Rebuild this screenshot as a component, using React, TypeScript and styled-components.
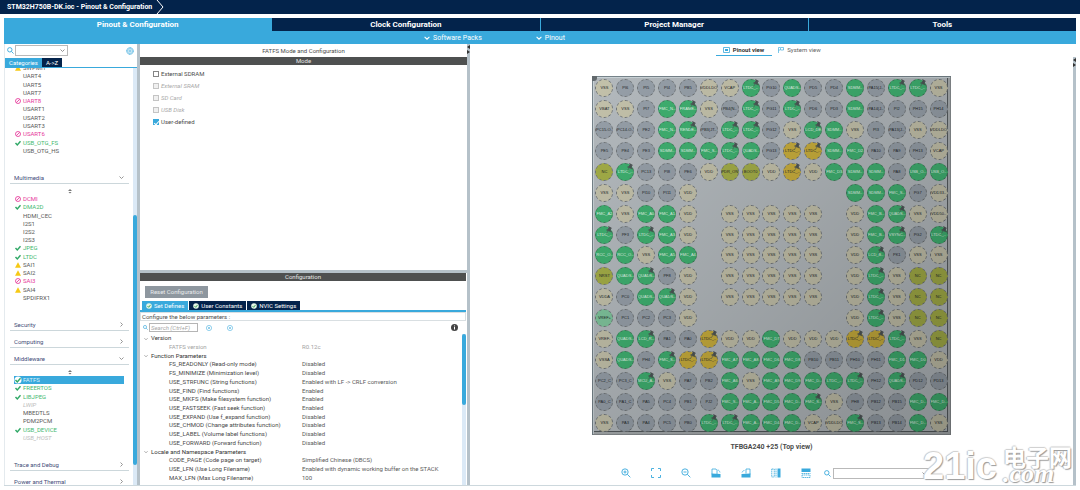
import React from "react";
import styled, { createGlobalStyle, css } from "styled-components";

const navy = "#03234b";
const blue = "#39a9dc";
const slate = "#b5c1c9";

const GlobalStyle = createGlobalStyle`
  * { box-sizing: border-box; }
  body { margin: 0; background: #fff; font: 6px/8px Roboto, "Liberation Sans", sans-serif; color: #4c4c4c; }
  button, input, select { font: inherit; color: inherit; margin: 0; padding: 0; }
`;

const Page = styled.div`
  display: flex;
  flex-direction: column;
  height: 100vh;
  position: relative;
`;

const TitleBar = styled.header`
  display: flex;
  align-items: center;
  flex: none;
  height: 14px;
  padding-left: 7px;
  gap: 4px;
  background: ${navy};
  color: #fff;
  font-size: 7px;
  font-weight: 700;
`;

const Shell = styled.div`
  display: flex;
  flex-direction: column;
  flex: 1;
  min-height: 0;
  margin: 4px;
`;

const MainTabs = styled.nav`
  display: grid;
  grid-template-columns: repeat(4, 1fr);
  flex: none;
  height: 13px;
  gap: 1px;
  background: ${blue};
`;

const MainTab = styled.button<{ $active?: boolean }>`
  border: 0;
  background: ${(p) => (p.$active ? blue : navy)};
  color: #fff;
  font-size: 8px;
  line-height: 13px;
  font-weight: 700;
`;

const SubBar = styled.div`
  display: flex;
  justify-content: center;
  align-items: center;
  gap: 54px;
  flex: none;
  height: 13px;
  padding-right: 91px;
  background: ${blue};
`;

const SubItem = styled.button`
  display: flex;
  align-items: center;
  gap: 3px;
  border: 0;
  background: none;
  color: #fff;
  font-size: 7px;
`;

const Main = styled.main`
  display: flex;
  flex: 1;
  min-height: 0;
  border-bottom: 1px solid #cdd8dd;
`;

const Splitter = styled.div`
  flex: none;
  width: 3px;
  background: ${slate};
`;

const SidePanel = styled.aside`
  display: flex;
  flex-direction: column;
  flex: none;
  width: 133px;
  border-left: 1px solid #e4eaee;
`;

const SearchRow = styled.div`
  display: flex;
  align-items: center;
  flex: none;
  height: 14px;
  padding: 0 3px 1px 2px;
  gap: 1px;
`;

const Spacer = styled.div`
  flex: 1;
`;

const ComboWrap = styled.label<{ $w: number }>`
  display: flex;
  align-items: center;
  width: ${(p) => p.$w}px;
  height: 11px;
  padding-right: 2px;
  border: 1px solid #b9b9b9;
  background: #fff;
`;

const Combo = styled.select`
  appearance: none;
  flex: 1;
  min-width: 0;
  height: 9px;
  border: 0;
  background: none;
`;

const TabStrip = styled.div<{ $inset?: boolean }>`
  display: flex;
  gap: ${(p) => (p.$inset ? 1 : 0)}px;
  flex: none;
  padding-left: ${(p) => (p.$inset ? 2 : 0)}px;
  border-bottom: ${(p) => (p.$inset ? 2 : 1)}px solid ${blue};
`;

const SmallTab = styled.button<{ $active?: boolean }>`
  display: flex;
  align-items: center;
  gap: 2px;
  height: 9px;
  padding: 0 4px;
  border: 0;
  background: ${(p) => (p.$active ? blue : navy)};
  color: #fff;
`;

const ScrollArea = styled.div`
  display: flex;
  flex: 1;
  min-height: 0;
`;

const Tree = styled.div`
  flex: 1;
  min-width: 0;
  overflow: hidden;
  padding: 0 4px 0 5px;
`;

const Track = styled.div`
  display: flex;
  flex-direction: column;
  flex: none;
  width: 4px;
  background: #dbe9f6;
`;

const Thumb = styled.div<{ $before: number; $size: number }>`
  height: ${(p) => p.$size}%;
  margin-top: ${(p) => p.$before}px;
  border-radius: 2px;
  background: ${blue};
`;

const Items = styled.ul<{ $h: number; $scrolled?: boolean }>`
  display: grid;
  grid-auto-rows: 1fr;
  min-height: ${(p) => p.$h}px;
  margin: ${(p) => (p.$scrolled ? -4 : 0)}px 5px 12px 4px;
  padding: 0;
  list-style: none;
`;

type State = "ok" | "warn" | "no" | "off" | "sel" | "";

const tones: Record<State, string> = {
  ok: "#45b970",
  warn: "#5a5a5a",
  no: "#e6399b",
  off: "#bcbcbc",
  sel: "#d8f0fa",
  "": "#5a5a5a",
};

const Item = styled.li<{ $state: State }>`
  display: flex;
  align-items: center;
  gap: 2px;
  min-height: 0;
  height: 100%;
  padding-left: 1px;
  line-height: 8px;
  color: ${(p) => tones[p.$state]};
  ${(p) => p.$state === "off" && css`font-style: italic;`}
  ${(p) => p.$state === "sel" && css`background: ${blue};`}
`;

const IconSlot = styled.span`
  display: flex;
  align-items: center;
  justify-content: center;
  width: 6px;
  height: 8px;
`;

const SectionHead = styled.button`
  display: flex;
  align-items: flex-end;
  justify-content: space-between;
  width: 100%;
  height: 17px;
  padding: 0 5px 1px 4px;
  border: 0;
  border-bottom: 1px solid #ccd7db;
  background: none;
  color: #3f4c78;
  svg { margin-bottom: 2px; }
`;

const Handle = styled.div`
  display: flex;
  justify-content: center;
  align-items: flex-end;
  height: 11px;
  padding: 0 0 1px;
`;

const Middle = styled.section`
  display: flex;
  flex-direction: column;
  flex: none;
  width: 327px;
`;

const PanelTitle = styled.h2`
  flex: none;
  margin: 0;
  font-size: 6px;
  line-height: 13px;
  font-weight: 400;
  text-align: center;
`;

const DarkBar = styled.h3`
  flex: none;
  margin: 0;
  background: #4e5050;
  color: #e6e6e6;
  font-size: 6px;
  line-height: 8px;
  font-weight: 400;
  text-align: center;
`;

const ModeBody = styled.div`
  display: flex;
  flex-direction: column;
  flex: 1;
  padding: 3px 13px;
  border-bottom: 3px solid ${slate};
`;

const CheckRow = styled.label<{ $off?: boolean }>`
  display: flex;
  align-items: center;
  gap: 2px;
  height: 12px;
  ${(p) => p.$off && css`color: #a9a9a9; font-style: italic;`}
`;

const CheckBox = styled.input`
  appearance: none;
  display: flex;
  justify-content: center;
  width: 6px;
  height: 6px;
  border: 1px solid #858585;
  background: #fff;
  &:disabled { border-color: #c4c4c4; background: #f0f0f0; }
  &:checked { border-color: ${blue}; background: ${blue}; }
  &:checked::after {
    content: "";
    width: 2px;
    height: 4px;
    border: solid #fff;
    border-width: 0 1px 1px 0;
    transform: rotate(40deg);
  }
`;

const Config = styled.div`
  display: flex;
  flex-direction: column;
  flex: none;
  height: 212px;
  padding-right: 1px;
`;

const ResetButton = styled.button`
  flex: none;
  width: 63px;
  height: 12px;
  margin: 5px 0 3px 5px;
  border: 0;
  background: #8e979f;
  color: #e8ebed;
`;

const Hint = styled.p`
  flex: none;
  margin: 0;
  padding-left: 1px;
  border: 1px solid #d9dfe2;
  line-height: 7px;
`;

const FilterRow = styled.div`
  display: flex;
  align-items: center;
  flex: none;
  height: 13px;
  padding: 0 8px 0 3px;
  gap: 1px;
`;

const SearchBox = styled.input`
  width: 49px;
  height: 9px;
  margin-right: 7px;
  padding: 0 1px;
  border: 1px solid #b5b5b5;
  &::placeholder { color: #a6a6a6; font-style: italic; opacity: 1; }
`;

const RoundButton = styled.button`
  display: flex;
  width: 6px;
  height: 6px;
  margin-right: 14px;
  border: 0;
  background: none;
`;

const Params = styled.table`
  flex: 1;
  display: block;
  tbody { display: grid; grid-auto-rows: 1fr; height: 148px; }
  tr { display: flex; align-items: center; padding-left: 4px; min-height: 0; }
  th, td { display: block; padding: 0; text-align: left; font-weight: 400; line-height: 8px; }
`;

const GroupCell = styled.th`
  color: #333;
  svg { margin-right: 3px; vertical-align: middle; }
`;

const NameCell = styled.th<{ $muted?: boolean }>`
  width: 158px;
  &&& { padding-left: 25px; }
  color: ${(p) => (p.$muted ? "#a3a3a3" : "#484848")};
`;

const ValueCell = styled.td<{ $muted?: boolean }>`
  color: ${(p) => (p.$muted ? "#a3a3a3" : "#5a5a5a")};
`;

const View = styled.section`
  display: flex;
  flex-direction: column;
  align-items: center;
  flex: 1;
  min-width: 0;
`;

const ViewTabs = styled.div`
  display: flex;
`;

const ViewTab = styled.button<{ $active?: boolean }>`
  display: flex;
  align-items: center;
  justify-content: center;
  gap: 3px;
  width: 56px;
  height: 12px;
  border: 0;
  border-bottom: 1px solid ${(p) => (p.$active ? blue : "transparent")};
  background: none;
  color: ${(p) => (p.$active ? "#333" : "#5f5f5f")};
  font-weight: ${(p) => (p.$active ? 700 : 400)};
`;

const Chip = styled.div`
  position: relative;
  display: grid;
  grid-template-columns: repeat(17, 1fr);
  grid-auto-rows: 1fr;
  flex: none;
  width: 359px;
  height: 359px;
  margin-top: 20px;
  padding: 2px;
  background: #b3b9bd;
  box-shadow: inset 1px 1px 0 #76838a, inset -1px -1px 0 #8a8f92, inset 2px 2px 0 #c9d2d6, inset -3px -3px 0 #a8adaf, inset -4px -4px 0 #555b5e;
`;

const Shade = styled.div`
  position: absolute;
  inset: 0;
  background: linear-gradient(135deg, rgba(0, 0, 0, 0) 0%, rgba(0, 0, 0, 0.1) 45%, rgba(0, 0, 0, 0.24) 100%);
`;

const Corner = styled.span`
  position: absolute;
  left: 0;
  top: 0;
  width: 5px;
  height: 5px;
  border-radius: 0 0 3px 0;
  background: #62696d;
`;

type Kind = "g" | "b" | "G" | "Y" | "o" | "m";
const fills: Record<Kind, string> = {
  g: "#969fa8",
  b: "#c3c1aa",
  G: "#3fb070",
  Y: "#c9ae3c",
  o: "#a3ad47",
  m: "#7fc49c",
};

const Pin = styled.div<{ $kind: Kind }>`
  position: relative;
  place-self: center;
  display: flex;
  align-items: center;
  justify-content: center;
  width: 18px;
  height: 18px;
  border: 1px dashed ${(p) => (p.$kind === "G" ? "#3d7a58" : "#6e7376")};
  border-radius: 50%;
  background: ${(p) => fills[p.$kind]};
  color: ${(p) => (p.$kind === "G" ? "#e2f6ea" : "#24282a")};
  font: 4px/6px "Liberation Sans", sans-serif;
  white-space: nowrap;
`;

const Tack = styled.svg`
  position: absolute;
  right: 0;
  top: -1px;
  width: 7px;
  height: 8px;
`;

const Caption = styled.p`
  margin: 8px 0 0;
  font-size: 7px;
  font-weight: 700;
`;

const ViewTools = styled.div`
  display: flex;
  align-items: center;
  gap: 20px;
  margin-top: 16px;
  height: 12px;
  padding-left: 7px;
`;

const ToolButton = styled.button`
  display: flex;
  width: 10px;
  height: 10px;
  border: 0;
  background: none;
`;

const FindGroup = styled.div`
  display: flex;
  align-items: center;
  gap: 2px;
  margin-left: -7px;
`;

const EdgeBar = styled.div`
  flex: none;
  width: 3px;
  margin-top: 13px;
  background: ${slate};
`;

const EdgeArrows = styled.svg`
  display: block;
  width: 3px;
  height: 12px;
`;

const Watermark = styled.div`
  position: absolute;
  right: 8px;
  bottom: 8px;
  display: flex;
  align-items: flex-end;
  gap: 6px;
  color: #fff;
  text-shadow: 1px 1px 1px #999, -1px 0 1px #c4c4c4, 0 -1px 1px #d0d0d0;
  pointer-events: none;
`;

const MarkBig = styled.span`
  font: 700 38px/32px "Liberation Sans", sans-serif;
`;

const MarkSide = styled.span`
  display: flex;
  flex-direction: column;
  font: 700 23px/20px "Noto Sans CJK SC", sans-serif;
`;

const MarkDomain = styled.span`
  font: italic 700 26px/16px "Liberation Serif", serif;
`;

const Chevron = ({ right, size = 5, color = "#8a8a8a" }: { right?: boolean; size?: number; color?: string }) => (
  <svg width={size} height={size} viewBox="0 0 10 10" fill="none" stroke={color} strokeWidth="1.8">
    <path d={right ? "M3 1l4 4-4 4" : "M1 3l4 4 4-4"} />
  </svg>
);

const Magnifier = ({ size = 7, sign }: { size?: number; sign?: "+" | "-" }) => (
  <svg width={size} height={size} viewBox="0 0 20 20" fill="none" stroke={blue} strokeWidth={sign ? 1.8 : 2.6}>
    <circle cx="8" cy="8" r="6.3" />
    <path d="M12.7 12.7l6 6" />
    {sign && <path d="M5 8h6" />}
    {sign === "+" && <path d="M8 5v6" />}
  </svg>
);

const Gear = () => (
  <svg width="8" height="8" viewBox="0 0 16 16" fill="none" stroke={blue}>
    <circle cx="8" cy="8" r="6.6" strokeWidth="2" strokeDasharray="2.4 1" />
    <circle cx="8" cy="8" r="5" />
    <circle cx="8" cy="8" r="2.2" strokeWidth="1.4" />
  </svg>
);

const StateIcon = ({ state }: { state: State }) => {
  if (state === "ok" || state === "sel")
    return (
      <svg width="6" height="6" viewBox="0 0 12 12" overflow="visible">
        {state === "sel" && <circle cx="6" cy="6" r="7" fill="#fff" />}
        <path d="M1 6l3.6 4L11 2.5" fill="none" stroke="#2fa866" strokeWidth="2.8" />
      </svg>
    );
  if (state === "warn")
    return (
      <svg width="6" height="6" viewBox="0 0 12 12">
        <path d="M6 .5L12 11.5H0z" fill="#f6c915" />
      </svg>
    );
  if (state === "no")
    return (
      <svg width="6" height="6" viewBox="0 0 12 12" fill="none" stroke="#e6399b" strokeWidth="1.7">
        <circle cx="6" cy="6" r="5" />
        <path d="M2.6 9.4l6.8-6.8" />
      </svg>
    );
  return null;
};

const TickBadge = () => (
  <svg width="6" height="6" viewBox="0 0 12 12">
    <circle cx="6" cy="6" r="5.6" fill="#e5f5e6" />
    <path d="M3 6l2.4 2.6L9 3.8" fill="none" stroke="#45a860" strokeWidth="2" />
  </svg>
);

const RoundIcon = () => (
  <svg width="6" height="6" viewBox="0 0 12 12" fill="none" stroke={blue} strokeWidth="1.1">
    <circle cx="6" cy="6" r="5.2" />
    <path d="M4 4l2 2 2-2M4 8l2-2 2 2" />
  </svg>
);

const InfoIcon = () => (
  <svg width="7" height="7" viewBox="0 0 14 14">
    <circle cx="7" cy="7" r="7" fill="#444" />
    <path d="M7 6v5M7 3v1.8" stroke="#fff" strokeWidth="2" />
  </svg>
);

const toolShapes: Record<string, React.ReactNode> = {
  "Fit to window": <path d="M1 6V1h5M14 1h5v5M19 14v5h-5M6 19H1v-5" fill="none" stroke={blue} strokeWidth="1.8" />,
  "Rotate right": (
    <>
      <path d="M2 13V2h8l2 3v7" fill="none" stroke={blue} strokeWidth="1.6" />
      <path d="M1 19v-8l18 1v7z" fill={blue} />
      <path d="M13 4c3 0 4 2 5 5" fill="none" stroke={blue} strokeWidth="1.4" />
    </>
  ),
  "Rotate left": (
    <>
      <path d="M18 13V2h-8v9" fill="none" stroke={blue} strokeWidth="1.6" />
      <path d="M19 19v-8l-18 1v7z" fill={blue} />
      <path d="M7 5C4 5 3 7 2 9" fill="none" stroke={blue} strokeWidth="1.4" />
    </>
  ),
  "Flip horizontal": (
    <>
      <path d="M1.5 2h5v16h-5zM10 1v18" fill="none" stroke={blue} strokeWidth="1.6" strokeDasharray="3 1" />
      <path d="M13 1h6v18h-6z" fill={blue} />
    </>
  ),
  "Flip vertical": (
    <>
      <path d="M1 1h18v7H1z" fill={blue} />
      <path d="M1 11h18M2 14h16v5H2z" fill="none" stroke={blue} strokeWidth="1.6" strokeDasharray="3 1" />
    </>
  ),
};

const Tool = ({ name }: { name: string }) => (
  <ToolButton aria-label={name}>
    {name.startsWith("Zoom") ? (
      <Magnifier size={10} sign={name === "Zoom in" ? "+" : "-"} />
    ) : (
      <svg width="10" height="10" viewBox="0 0 20 20">{toolShapes[name]}</svg>
    )}
  </ToolButton>
);

const tools = ["Zoom in", "Fit to window", "Zoom out", "Rotate right", "Rotate left", "Flip horizontal", "Flip vertical"];

type Entry = [string, State];
const connectivity: Entry[] = [
  ["SWPMI1", "warn"], ["UART4", ""], ["UART5", ""], ["UART7", ""], ["UART8", "no"], ["USART1", ""],
  ["USART2", ""], ["USART3", ""], ["USART6", "no"], ["USB_OTG_FS", "ok"], ["USB_OTG_HS", ""],
];
const multimedia: Entry[] = [
  ["DCMI", "no"], ["DMA2D", "ok"], ["HDMI_CEC", ""], ["I2S1", ""], ["I2S2", ""], ["I2S3", ""], ["JPEG", "ok"],
  ["LTDC", "ok"], ["SAI1", "warn"], ["SAI2", "warn"], ["SAI3", "no"], ["SAI4", "warn"], ["SPDIFRX1", ""],
];
const middleware: Entry[] = [
  ["FATFS", "sel"], ["FREERTOS", "ok"], ["LIBJPEG", "ok"], ["LWIP", "off"], ["MBEDTLS", ""], ["PDM2PCM", ""],
  ["USB_DEVICE", "ok"], ["USB_HOST", "off"],
];

const ItemList = ({ data, height, scrolled }: { data: Entry[]; height: number; scrolled?: boolean }) => (
  <Items $h={height} $scrolled={scrolled}>
    {data.map(([name, state]) => (
      <Item key={name} $state={state}>
        <IconSlot><StateIcon state={state} /></IconSlot>
        {name}
      </Item>
    ))}
  </Items>
);

const Section = ({ title, open }: { title: string; open?: boolean }) => (
  <>
    <SectionHead>
      {title}
      <Chevron right={!open} />
    </SectionHead>
    {open && (
      <Handle>
        <svg width="4" height="5" viewBox="0 0 8 10"><path d="M4 0l4 4H0zM1 6h6L4 9z" fill="#777" /></svg>
      </Handle>
    )}
  </>
);

const params: [string, string?][] = [
  ["Version"],
  ["FATFS version", "R0.12c"],
  ["Function Parameters"],
  ["FS_READONLY (Read-only mode)", "Disabled"],
  ["FS_MINIMIZE (Minimization level)", "Disabled"],
  ["USE_STRFUNC (String functions)", "Enabled with LF -> CRLF conversion"],
  ["USE_FIND (Find functions)", "Enabled"],
  ["USE_MKFS (Make filesystem function)", "Enabled"],
  ["USE_FASTSEEK (Fast seek function)", "Enabled"],
  ["USE_EXPAND (Use f_expand function)", "Disabled"],
  ["USE_CHMOD (Change attributes function)", "Disabled"],
  ["USE_LABEL (Volume label functions)", "Disabled"],
  ["USE_FORWARD (Forward function)", "Disabled"],
  ["Locale and Namespace Parameters"],
  ["CODE_PAGE (Code page on target)", "Simplified Chinese (DBCS)"],
  ["USE_LFN (Use Long Filename)", "Enabled with dynamic working buffer on the STACK"],
  ["MAX_LFN (Max Long Filename)", "100"],
];

/* Each ball is kind:label; a trailing ! marks a pinned signal, and - an empty place. */
const balls = `
b:VSS g:PI6 g:PI5 g:PI4 g:PB5 b:VDDLDO b:VCAP G:LTDC_..! g:PG10 G:QUADS.. g:PD5 g:PD4 G:SDMM.. g:PA15(J.. G:LTDC_..! G:LTDC_..! b:VSS
b:VBAT b:VSS g:PI7 G:FMC_N.. G:FRAME..! b:VSS g:PB4(N.. G:LTDC_..! g:PG11 G:LTDC_..! g:PD6 g:PD3 G:SDMM.. g:PA14(J.. g:PI2 g:PH15 g:PH14
g:PC15-O.. g:PC14-O.. g:PE2 G:FMC_N.. G:RENDE..! g:PB3(JT.. G:LTDC_..! G:LTDC_..! g:PG12 b:VSS G:LCD_DE! G:SDMM.. b:VSS g:PI3 g:PA13(J.. b:VSS b:VDDLDO
g:PE5 g:PE4 g:PE3 G:SDMM.. G:SDMM.. G:FMC_S.. G:LTDC_..! G:QUADS.. g:PG13 Y:LTDC_..! Y:LTDC_..! G:SDMM.. G:FMC_D2 g:PA10 g:PA9 g:PH13 b:VCAP
o:NC G:LTDC_..! g:PC13 g:PI8 g:PE6 b:VDD o:PDR_ON o:BOOT0 b:VDD Y:LTDC_..! b:VDD G:FMC_D3 G:SDMM.. G:SDMM.. g:PA8 G:USB_O.. G:USB_O..
b:VSS b:VSS g:PI10 g:PI11 b:VDD - - - - - - - G:SDMM.. G:SDMM.. G:FMC_S.. g:PG7 b:VDD33..
G:FMC_A2 b:VSS G:FMC_A0 G:FMC_A1 b:VDD - b:VSS b:VSS b:VSS b:VSS b:VSS - b:VDD G:FMC_B.. G:QUADS..! b:VSS b:VDD50..
G:LTDC_..! g:PF3 G:LTDC_..! G:FMC_A3 b:VDD - b:VSS b:VSS b:VSS b:VSS b:VSS - b:VDD G:FMC_B.. G:VSYNC..! g:PG2 G:LTDC_..!
G:RCC_O.. G:RCC_O.. b:VSS G:FMC_A5 G:FMC_A4 - b:VSS b:VSS b:VSS b:VSS b:VSS - b:VDD G:LCD_B..! g:PK1 b:VSS b:VSS
o:NRST G:QUADS.. G:QUADS..! g:PF8 b:VDD - b:VSS b:VSS b:VSS b:VSS b:VSS - b:VDD G:LTDC_..! b:VSS o:NC o:NC
b:VDDA g:PC0 G:QUADS.. G:QUADS..! b:VDD - b:VSS b:VSS b:VSS b:VSS b:VSS - b:VDD G:LTDC_..! b:VSS o:NC o:NC
m:VREF+ g:PC1 g:PC2 g:PC3 b:VDD - - - - - - - b:VDD G:LTDC_..! b:VSS o:NC o:NC
b:VREF- G:QUADS.. G:LCD_R..! g:PA1 g:PA0 Y:LTDC_..! b:VDD b:VDD G:FMC_D7 b:VDD b:VDD b:VDD Y:LTDC_..! Y:LTDC_..! G:LTDC_..! b:VSS o:NC
b:VSSA G:QUADS.. g:PH4 G:FMC_S..! Y:LTDC_..! Y:LTDC_..! G:FMC_A7 G:FMC_A8 G:FMC_D6 G:FMC_D8 g:PB10 g:PB11 g:PH10 g:PH11 G:FMC_D1 G:FMC_D0 b:VDD
g:PC2_C g:PC3_C G:MCU_A..! b:VSS g:PA7 g:PB2 G:FMC_A6 b:VSS G:FMC_A9 G:FMC_D9 G:FMC_D.. G:LTDC_.. G:LTDC_..! g:PH12 G:QUADS..! g:PD12 g:PD13
g:PA0_C g:PA1_C g:PA5 g:PC4 g:PB1 g:PJ2 G:FMC_S.. G:FMC_A.. G:FMC_D5 G:FMC_D.. G:FMC_S..! b:VSS g:PH8 g:PB12 g:PB15 G:FMC_D.. G:FMC_D..
b:VSS g:PA3 g:PA4 g:PC5 g:PB0 G:LTDC_..! G:LTDC_..! G:FMC_A.. G:FMC_D4 G:FMC_D.. b:VCAP b:VDDLDO G:FMC_S..! g:PB13 g:PB14 G:FMC_D.. b:VSS
`.trim().split(/\s+/);

const Package = () => (
  <Chip>
    {balls.map((ball, i) => {
      if (ball === "-") return <span key={i} />;
      const pinned = ball.endsWith("!");
      return (
        <Pin key={i} $kind={ball[0] as Kind}>
          {ball.slice(2).replace("!", "")}
          {pinned && (
            <Tack viewBox="0 0 14 16">
              <path d="M7 1l6 3-2 2v4l2 2-10-4 3-1 2-4zM6 10l-3 5" fill="#4d5456" stroke="#4d5456" strokeWidth="1.2" />
            </Tack>
          )}
        </Pin>
      );
    })}
    <Shade />
    <Corner />
  </Chip>
);

export default function App() {
  return (
    <Page>
      <GlobalStyle />
      <TitleBar>
        STM32H750B-DK.ioc - Pinout &amp; Configuration
        <svg width="8" height="14" viewBox="0 0 8 14" fill="none" stroke="#fff"><path d="M1 0l6 7-6 7" /></svg>
      </TitleBar>
      <Shell>
        <MainTabs>
          <MainTab $active>Pinout &amp; Configuration</MainTab>
          <MainTab>Clock Configuration</MainTab>
          <MainTab>Project Manager</MainTab>
          <MainTab>Tools</MainTab>
        </MainTabs>
        <SubBar>
          <SubItem><Chevron color="#fff" size={6} />Software Packs</SubItem>
          <SubItem><Chevron color="#fff" size={6} />Pinout</SubItem>
        </SubBar>
        <Main>
          <SidePanel>
            <SearchRow>
              <Magnifier />
              <ComboWrap $w={53}><Combo aria-label="Search peripherals" /><Chevron /></ComboWrap>
              <Spacer />
              <Gear />
            </SearchRow>
            <TabStrip>
              <SmallTab $active>Categories</SmallTab>
              <SmallTab>A-&gt;Z</SmallTab>
            </TabStrip>
            <ScrollArea>
              <Tree>
                <ItemList data={connectivity} height={91} scrolled />
                <Section title="Multimedia" open />
                <ItemList data={multimedia} height={107} />
                <Section title="Security" />
                <Section title="Computing" />
                <Section title="Middleware" open />
                <ItemList data={middleware} height={66} />
                <Section title="Trace and Debug" />
                <Section title="Power and Thermal" />
              </Tree>
              <Track><Thumb $before={147} $size={60} /></Track>
            </ScrollArea>
          </SidePanel>
          <Splitter />
          <Middle>
            <PanelTitle>FATFS Mode and Configuration</PanelTitle>
            <DarkBar>Mode</DarkBar>
            <ModeBody>
              <CheckRow><CheckBox type="checkbox" />External SDRAM</CheckRow>
              <CheckRow $off><CheckBox type="checkbox" disabled />External SRAM</CheckRow>
              <CheckRow $off><CheckBox type="checkbox" disabled />SD Card</CheckRow>
              <CheckRow $off><CheckBox type="checkbox" disabled />USB Disk</CheckRow>
              <CheckRow><CheckBox type="checkbox" defaultChecked />User-defined</CheckRow>
            </ModeBody>
            <Config>
              <DarkBar>Configuration</DarkBar>
              <ResetButton>Reset Configuration</ResetButton>
              <TabStrip $inset>
                <SmallTab $active><TickBadge />Set Defines</SmallTab>
                <SmallTab><TickBadge />User Constants</SmallTab>
                <SmallTab><TickBadge />NVIC Settings</SmallTab>
              </TabStrip>
              <Hint>Configure the below parameters :</Hint>
              <FilterRow>
                <Magnifier size={5} />
                <SearchBox type="text" aria-label="Search" placeholder="Search (Ctrl+F)" />
                <RoundButton aria-label="Expand all"><RoundIcon /></RoundButton>
                <RoundButton aria-label="Collapse all"><RoundIcon /></RoundButton>
                <Spacer />
                <InfoIcon />
              </FilterRow>
              <ScrollArea>
                <Params>
                  <tbody>
                    {params.map(([name, value]) =>
                      value === undefined ? (
                        <tr key={name}><GroupCell colSpan={2}><Chevron size={4} />{name}</GroupCell></tr>
                      ) : (
                        <tr key={name}>
                          <NameCell scope="row" $muted={name === "FATFS version"}>{name}</NameCell>
                          <ValueCell $muted={name === "FATFS version"}>{value}</ValueCell>
                        </tr>
                      )
                    )}
                  </tbody>
                </Params>
                <Track><Thumb $before={0} $size={47} /></Track>
              </ScrollArea>
            </Config>
          </Middle>
          <Splitter>
            <EdgeArrows viewBox="0 0 3 12"><path d="M3 1v4L0 3zM0 6v4l3-2z" fill="#333" /></EdgeArrows>
          </Splitter>
          <View>
            <ViewTabs>
              <ViewTab $active>
                <svg width="7" height="6" viewBox="0 0 14 12"><path d="M1 1h12v10H1z" fill="none" stroke={blue} strokeWidth="1.6" /><path d="M4 4h6v4H4z" fill={blue} /></svg>
                Pinout view
              </ViewTab>
              <ViewTab>
                <svg width="6" height="6" viewBox="0 0 12 12" fill="none" stroke={blue} strokeWidth="1.3"><path d="M1 12V1h4v5H1M6 1h5v5H6" /></svg>
                System view
              </ViewTab>
            </ViewTabs>
            <Package />
            <Caption>TFBGA240 +25 (Top view)</Caption>
            <ViewTools>
              {tools.map((name) => <Tool key={name} name={name} />)}
              <FindGroup>
                <Magnifier />
                <ComboWrap $w={97}><Combo aria-label="Find pin" /><Chevron /></ComboWrap>
              </FindGroup>
            </ViewTools>
          </View>
          <EdgeBar>
            <EdgeArrows viewBox="0 0 3 12"><path d="M3 1v4L0 3zM0 6v4l3-2z" fill="#333" /></EdgeArrows>
          </EdgeBar>
        </Main>
      </Shell>
      <Watermark>
        <MarkBig>21ic</MarkBig>
        <MarkSide>电子网<MarkDomain>.com</MarkDomain></MarkSide>
      </Watermark>
    </Page>
  );
}
